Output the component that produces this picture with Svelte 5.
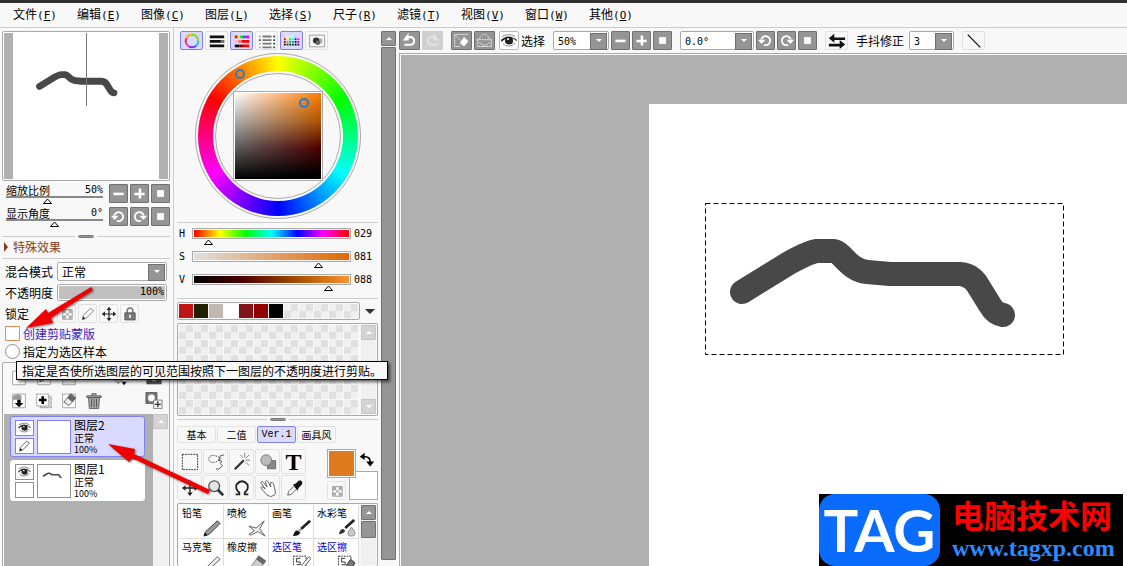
<script lang="ts">
	const menus = [
		['文件', 'F'],
		['编辑', 'E'],
		['图像', 'C'],
		['图层', 'L'],
		['选择', 'S'],
		['尺子', 'R'],
		['滤镜', 'T'],
		['视图', 'V'],
		['窗口', 'W'],
		['其他', 'O']
	]

	const STROKE =
		'M37 89 L84 60 Q104 49 112 48 H128 C138 49 143 67 162 69 L185 71 H255 Q266 72 272 81 L285 102 Q290 111 298 112'

	const checks = (x: number, y: number) =>
		`<path fill="#fff" stroke="#888" d="M${x}.5 ${y}.5h12v12h-12z"/><path fill="#aaa" d="M${x + 1} ${y + 1}h4v4h-4zM${x + 8} ${y + 1}h4v4h-4zM${x + 5} ${y + 5}h3v3h-3zM${x + 1} ${y + 8}h4v4h-4zM${x + 8} ${y + 8}h4v4h-4z"/>`

	const sheet = '<path fill="#fff" stroke="#999" d="M2.5 2.5h15v16h-15z"/>'

	// all icons share a 20x20 box
	const icons: Record<string, string> = {
		minus: '<path fill="#fff" d="M4 9h12v3H4z"/>',
		plus: '<path fill="#fff" d="M4 9h12v3H4zM9 4h3v12H9z"/>',
		stop: '<path fill="#fff" d="M6 6h8v8H6z"/>',
		ccw: '<path fill="none" stroke="#fff" stroke-width="2.2" d="M5 9A5.300 5.300 0 1 1 8 15"/><path fill="#fff" d="M1 9h9l-4.500 5z"/>',
		cw: '<path fill="none" stroke="#fff" stroke-width="2.2" d="M15 9A5.300 5.300 0 1 0 12 15"/><path fill="#fff" d="M19 9h-9l4.500 5z"/>',
		undo: '<path fill="none" stroke="#fff" stroke-width="2.5" d="M7 6h4a4.500 4.500 0 0 1 0 9H4"/><path fill="#fff" d="M9 1v9H2z"/>',
		redo: '<path fill="none" stroke="#e2e2e2" stroke-width="2.5" d="M13 6H9a4.500 4.500 0 0 0 0 9h7"/><path fill="#e2e2e2" d="M11 1v9h7z"/>',
		deselect:
			'<path fill="none" stroke="#fff" stroke-dasharray="2 1" d="M17 3H2v14h7"/><path stroke="#fff" stroke-dasharray="2 1" d="m3 4 8 8"/><path fill="#fff" d="m13 6 5 5-5 6-5-4z"/>',
		invert:
			'<path fill="none" stroke="#fff" stroke-dasharray="2 1" d="M1 9h18M2 9v8h16V9M4 8q6-11 12 0M4 12q6 7 12 0"/>',
		eye: '<path fill="#222" d="M1 9q8-8 18 0l-1 1q-3-3-4-3 2 7-4 7-6-1-4-6-2 0-4 3z"/><path fill="#fff" d="M8 7h2v2H8z"/><path stroke="#888" fill="none" d="M3 13q7 6 14-1M2 5q8-4 15 0"/>',
		flip: '<path fill="#111" d="M1 7l6-5v4h12v3H7v3zM19 14l-6-5v4H1v3h12v3z"/>',
		line: '<path stroke="#000" stroke-width="1.300" d="m3 3 14 14"/>',
		wheel:
			'<circle cx="10" cy="10" r="7" fill="none" stroke="#e3c" stroke-width="2"/><path fill="none" stroke="#fb0" stroke-width="2" d="M3.600 7a7 7 0 0 1 6.400-4"/><path fill="none" stroke="#7e2" stroke-width="2" d="M10 3a7 7 0 0 1 7 7"/><path fill="none" stroke="#2cf" stroke-width="2" d="M17 10a7 7 0 0 1-3 5.700"/><path fill="none" stroke="#63f" stroke-width="2" d="M14 15.700A7 7 0 0 1 7 16.300"/><path fill="none" stroke="#f33" stroke-width="2" d="M3.300 12a7 7 0 0 1 .3-5"/>',
		bars: '<path fill="#111" d="M2 4h16v3H2zM2 9h16v3H2zM2 14h16v3H2z"/><path fill="#777" d="M14 9h4v3h-4z"/>',
		hsv: '<path fill="#f00" d="M2 4h3v3H2zM10 9h8v3h-8zM12 14h6v3h-6z"/><path fill="#fe0" d="M5 4h3v3H5z"/><path fill="#0d3" d="M8 4h3v3H8z"/><path fill="#06f" d="M11 4h3v3h-3z"/><path fill="#d0e" d="M14 4h4v3h-4z"/><path fill="#fbb" d="M2 9h4v3H2z"/><path fill="#f66" d="M6 9h4v3H6z"/><path fill="#100" d="M2 14h5v3H2z"/><path fill="#800" d="M7 14h5v3H7z"/>',
		mixer:
			'<path fill="#777" d="M5 4h10v2H5zM5 8h10v2H5zM5 12h10v2H5zM5 16h10v2H5z"/><path fill="#444" d="M1 8h2v2H1zM17 4h2v2h-2zM17 8h2v2h-2zM17 12h2v2h-2zM17 16h2v2h-2z"/><path fill="#aaa" d="M1 4h2v2H1zM1 12h2v2H1zM1 16h2v2H1z"/>',
		swatches: ['#fbb #ffb #bfb #bff #bbf #fbf', '#f00 #ff0 #0f0 #0ff #00f #f0f', '#a00 #aa0 #0a0 #0aa #00a #a0a', '#300 #330 #030 #033 #003 #303']
			.map((row, y) =>
				row
					.split(' ')
					.map((c, x) => `<path fill="${c}" d="M${1 + x * 3} ${4 + y * 3}h2v2h-2z"/>`)
					.join('')
			)
			.join(''),
		scratch:
			'<path fill="#f4f4f4" stroke="#999" d="M1.500 3.500h17v13h-17z"/><circle cx="13" cy="10" r="3" fill="#aaa"/><circle cx="9" cy="9.500" r="3.500" fill="#333"/><circle cx="11" cy="12" r="2.500" fill="#666"/>',
		checker: checks(4, 4),
		pencil:
			'<path fill="#fff" stroke="#666" d="m3 17 1-5 9-9 4 3-9 9z"/><path fill="#222" d="m3 17 1-4 3 3z"/>',
		move: '<path stroke="#222" stroke-width="1.500" d="M10 3v14M3 10h14"/><path fill="#222" d="m10 1 3 4H7zM10 19l3-4H7zM1 10l4-3v6zM19 10l-4-3v6z"/>',
		lock: '<path fill="none" stroke="#777" stroke-width="2" d="M6.500 9V6a3.500 3.500 0 0 1 7 0v3"/><path fill="#777" stroke="#555" d="M3.500 8.500h13v9h-13z"/><path fill="#fff" d="M9 11h2v4H9z"/>',
		sheet,
		linework: sheet + '<path fill="#ddd" stroke="#555" d="m5 15 2-5 6-5 2 2-5 6z"/>',
		folder: '<path fill="#e4e4e4" stroke="#999" d="M2.500 5.500h5l2 2h8v11h-15z"/>',
		ruler: '<path fill="none" stroke="#777" d="m1 10 8 7 9-8M9 17V4"/><path fill="#000" d="M13 15h6l-3 4z"/>',
		mask: '<path fill="#555" d="M1 2h18v16H1z"/><circle cx="10" cy="10" r="4" fill="#fff"/>',
		down: sheet + '<path fill="#999" d="M3 5q6-5 10 0v4H3z"/><path fill="#000" d="M8 9h4v4h3l-5 5-5-5h3z"/>',
		merge:
			'<path fill="#ddd" stroke="#777" stroke-dasharray="2 1" d="M5.500 5.500h13v13h-13z"/><path fill="#fff" stroke="#777" stroke-dasharray="2 1" d="M1.500 2.500h14v14h-14z"/><path fill="#000" d="M7 5h3v3h3v3h-3v3H7v-3H4V8h3z"/>',
		clear: sheet + '<path fill="#eee" stroke="#555" d="m12 2 6 5-8 9-6-4z"/><path fill="#666" d="m12 2 6 5-4 5-6-5z"/>',
		trash:
			'<path fill="#aaa" stroke="#555" d="M3.500 6.500h13l-1 13h-11zM1.500 4.500h17v2h-17zM7.500 4V2h5v2"/><path stroke="#444" d="M7 8v10M10 8v10M13 8v10"/>',
		addmask:
			'<path fill="#777" stroke="#555" d="M.5 .5h13v13H.5z"/><circle cx="7" cy="7" r="4" fill="#fff"/><path fill="#eee" stroke="#777" d="M9.500 9.500h10v10h-10z"/><path stroke="#333" stroke-width="1.500" d="M14.500 11v7M11 14.500h7"/>',
		rect: '<path fill="none" stroke="#222" stroke-dasharray="2 1" d="M1.500 1.500h17v17h-17z"/>',
		lasso:
			'<path fill="none" stroke="#444" stroke-dasharray="2 1" d="M14 5Q4 0 2 6q0 6 8 4l6-4"/><path fill="none" stroke="#444" d="m19 2-4 1-2 5 3 1-1 3 2 2q-3 5-7 4"/>',
		wand: '<path stroke="#333" stroke-width="2.5" d="m2 18 10-10"/><path stroke="#777" d="M13 0v5M19 8h-5M18 2l-4 4M8 2l3 3M18 14l-4-4"/>',
		shape: '<path fill="#888" stroke="#666" d="M9.500 8.500h9v9h-9z"/><circle cx="8" cy="8" r="6" fill="#bbb" stroke="#777"/>',
		zoom: '<circle cx="8" cy="8" r="6" fill="#e4e4e4" stroke="#555" stroke-width="1.500"/><path stroke="#333" stroke-width="3" d="m12 12 6 6"/>',
		rotate: '<path fill="none" stroke="#222" stroke-width="2" d="M3 17h4v-2Q2 11 4 6q6-7 12 0 2 5-3 9v2h4"/>',
		hand: '<path fill="#fff" stroke="#555" d="M9 18 3 11q-2-3 1-2l3 2-5-7q1-3 3 0l4 5-2-6q2-3 3 0l3 6 0-5q2-1 3 1l2 8q1 3-1 5-4 3-8 0z"/>',
		dropper: '<path fill="#fff" stroke="#555" d="m3 18 1-4 6-6 3 3-6 6z"/><path fill="#111" d="m9 6 3-1 3-3q3-1 4 1t-1 4l-3 3-1 3z"/>',
		swap: '<path fill="none" stroke="#000" stroke-width="2" d="M4 6h4q6 0 6 7"/><path fill="#000" d="M7 1v9L1 6zM9 12h10l-5 6z"/>',
		pen: '<path fill="#999" stroke="#333" d="m1 19 2-5L16 2l3 3L7 17z"/><path fill="#111" d="m1 19 1-4 3 3z"/>',
		airbrush:
			'<path fill="#eee" stroke="#555" d="m1 17 6-4-6-5 8 2 9-8-5 9 6 8-8-5-8 4z"/>',
		brush: '<path stroke="#222" stroke-width="3" d="m9 11 10-9"/><path stroke="#aaa" stroke-width="3" d="m6 14 3-3"/><path fill="#111" d="M0 19q2-7 5-6l3 2q-1 4-8 4z"/>',
		water: '<path stroke="#222" stroke-width="3" d="m8 10 10-9"/><path fill="#333" d="M1 17q1-6 5-6l2 2q-1 3-7 4z"/><path fill="#ccc" stroke="#888" d="M15 9q8 10 0 10t0-10z"/>',
		marker: '<path fill="#eee" stroke="#555" d="M4 16 16 4l3 3L7 18H4z"/><path fill="#333" d="m3 18 1-4 4 4z"/>',
		eraser: '<path fill="#ccc" stroke="#888" d="m4 14 8-11 8 6-9 10z"/><path fill="#666" d="m9 7 8 6 3-4-8-6z"/>',
		selpen:
			'<path fill="#fff" stroke="#222" stroke-dasharray="2 1" d="M.5 3.500h14v15H.5z"/><path fill="none" stroke="#222" d="M8 6H4v4h4v3H4"/><path fill="#fff" stroke="#444" d="m9 17 1-4 8-9 2 2-8 10z"/>',
		seleraser:
			'<path fill="#fff" stroke="#222" stroke-dasharray="2 1" d="M.5 3.500h14v15H.5z"/><path fill="none" stroke="#222" d="M8 6H4v4h4v3H4"/><path fill="#777" stroke="#333" d="m9 14 5-7 5 4-5 8z"/>'
	}

	const modes = [
		['wheel', '色环', true],
		['bars', 'RGB滑块', false],
		['hsv', 'HSV滑块', true],
		['mixer', '中间色', false],
		['swatches', '自定义色盘', true],
		['scratch', '调色板', false]
	] as const

	const channels = [
		{ name: 'H', value: 29, max: 360, text: '029', track: 'linear-gradient(to right, red, yellow, lime, cyan, blue, magenta, red)' },
		{ name: 'S', value: 81, max: 100, text: '081', track: 'linear-gradient(to right, #e0e0e0, #e06800)' },
		{ name: 'V', value: 88, max: 100, text: '088', track: 'linear-gradient(to right, #000, #4c0000 32%, #b05400 70%, #ff9430)' }
	]

	const recent = ['#c01418', '#202000', '#c0b8b0', '#ffffff', '#801418', '#900000', '#000000']
	const tabs = ['基本', '二值', 'Ver.1', '画具风']
	const tools = ['rect', 'lasso', 'wand', 'shape', 'text', 'move', 'zoom', 'rotate', 'hand', 'dropper']
	const brushes = [
		['铅笔', 'pen'],
		['喷枪', 'airbrush'],
		['画笔', 'brush'],
		['水彩笔', 'water'],
		['马克笔', 'marker'],
		['橡皮擦', 'eraser'],
		['选区笔', 'selpen'],
		['选区擦', 'seleraser']
	]
	const layers = [
		{ name: '图层2', active: true },
		{ name: '图层1', active: false }
	]

	let zoom = $state(42)
	let angle = $state(50)
	let opacity = $state(100)
	let clipping = $state(false)
</script>

{#snippet icon(name: string)}
	<svg class="icon" viewBox="0 0 20 20" aria-hidden="true">{@html icons[name]}</svg>
{/snippet}

{#snippet grey(name: string, label: string)}
	<button class="grey" aria-label={label}>{@render icon(name)}</button>
{/snippet}

{#snippet grip()}
	<div class="grip"><i></i><b></b><i></i></div>
{/snippet}

<div class="app">
	<nav class="menubar">
		{#each menus as [name, key]}
			<button>{name}<span>(<u>{key}</u>)</span></button>
		{/each}
	</nav>

	<div class="workspace">
		<aside class="left">
			<div class="navigator">
				<svg viewBox="0 0 164 146" preserveAspectRatio="none">
					<path fill="#b0b0b0" d="M0 0h9v146H0zM155 0h9v146h-9z" />
					<g transform="translate(25 28) scale(.285)">
						<path class="ink" d={STROKE} />
					</g>
					<path fill="#777" d="M82 0h1v73h-1z" />
				</svg>
			</div>

			<div class="view-rows">
				<div class="view-row">
					<div class="view-slider">
						<label for="zoom">缩放比例</label><output>50%</output>
						<input id="zoom" type="range" bind:value={zoom} />
					</div>
					{@render grey('minus', '缩小')}
					{@render grey('plus', '放大')}
					{@render grey('stop', '重置缩放')}
				</div>
				<div class="view-row">
					<div class="view-slider">
						<label for="angle">显示角度</label><output>0°</output>
						<input id="angle" type="range" bind:value={angle} />
					</div>
					{@render grey('ccw', '逆时针旋转')}
					{@render grey('cw', '顺时针旋转')}
					{@render grey('stop', '重置旋转')}
				</div>
			</div>

			{@render grip()}
			<button class="effects"><i></i>特殊效果</button>

			<div class="props">
				<div class="prop">
					<label for="blend">混合模式</label>
					<div class="drop"><select id="blend"><option>正常</option></select></div>
				</div>
				<div class="prop">
					<label for="opacity">不透明度</label>
					<div class="opacity">
						<input id="opacity" type="range" bind:value={opacity} />
						<output>{opacity}%</output>
					</div>
				</div>
				<div class="prop">
					<span>锁定</span>
					<div class="locks">
						<button class="flat" aria-label="锁定不透明度">{@render icon('checker')}</button>
						<button class="flat" aria-label="锁定绘画">{@render icon('pencil')}</button>
						<button class="flat" aria-label="锁定移动">{@render icon('move')}</button>
						<button class="flat" aria-label="锁定全部">{@render icon('lock')}</button>
					</div>
				</div>
				<label class="tick hot"><input type="checkbox" bind:checked={clipping} />创建剪贴蒙版</label>
				<label class="tick"><input type="radio" name="source" />指定为选区样本</label>
			</div>

			<section class="layers">
				<div class="layer-tools">
					<div>
						{#each ['sheet', 'linework', 'folder', 'ruler', 'mask'] as name}
							<button class:push={name === 'ruler'} aria-label={name}>{@render icon(name)}</button>
						{/each}
					</div>
					<div>
						{#each ['down', 'merge', 'clear', 'trash', 'addmask'] as name}
							<button aria-label={name}>{@render icon(name)}</button>
						{/each}
					</div>
				</div>
				<div class="layer-body">
					<ul>
						{#each layers as layer}
							<li class:active={layer.active}>
								<div class="flags">
									<button aria-label="显示">{@render icon('eye')}</button>
									<button aria-label="编辑">{#if layer.active}{@render icon('pencil')}{/if}</button>
								</div>
								<div class="thumb">
									{#if !layer.active}
										<svg viewBox="0 0 32 32">
											<g transform="translate(3 5) scale(.067)"><path class="ink" d={STROKE} /></g>
										</svg>
									{/if}
								</div>
								<div class="info"><strong>{layer.name}</strong><span>正常</span><small>100%</small></div>
							</li>
						{/each}
					</ul>
					<div class="scroll pale"><button class="up" aria-label="向上"></button></div>
				</div>
			</section>
		</aside>

		<section class="middle">
			<div class="modes">
				{#each modes as [name, label, on]}
					<button class="flat" class:on aria-label={label}>{@render icon(name)}</button>
				{/each}
			</div>

			<div class="wheel">
				<div class="hue">
					<div class="hole">
						<div class="rim"></div>
						<div class="square"><div class="shade"></div></div>
					</div>
				</div>
				<span class="dot hue-dot"></span>
				<span class="dot shade-dot"></span>
			</div>

			<div class="channels">
				{#each channels as c}
					<div class="channel">
						<label for={c.name}>{c.name}</label>
						<input id={c.name} type="range" max={c.max} value={c.value} style="--track: {c.track}" />
						<output>{c.text}</output>
					</div>
				{/each}
			</div>

			<div class="recent">
				<div class="box cells">
					{#each { length: 12 } as _, i}
						<span class="cell" style:background={recent[i]}></span>
					{/each}
				</div>
				<button class="more" aria-label="更多"></button>
			</div>

			<div class="box palette">
				<div class="cells">
					{#each { length: 72 } as _}
						<span class="cell"></span>
					{/each}
				</div>
				<div class="scroll pale">
					<button class="up" aria-label="向上"></button>
					<button class="down" aria-label="向下"></button>
				</div>
			</div>

			{@render grip()}

			<div class="tabs">
				{#each tabs as tab}
					<button class="flat" class:on={tab === 'Ver.1'}>{tab}</button>
				{/each}
			</div>

			<div class="toolbox">
				<div class="tools">
					{#each tools as tool}
						<button class="flat" aria-label={tool}>
							{#if tool === 'text'}<b>T</b>{:else}{@render icon(tool)}{/if}
						</button>
					{/each}
				</div>
				<div class="colours">
					<button class="fore" aria-label="前景色"></button>
					<button class="swap" aria-label="交换">{@render icon('swap')}</button>
					<button class="flat clear" aria-label="透明色">{@render icon('checker')}</button>
					<button class="back" aria-label="背景色"></button>
				</div>
			</div>

			<div class="box brushes">
				<div class="brush-grid">
					{#each brushes as [name, art]}
						<button class:selection={name.startsWith('选区')}>{name}{@render icon(art)}</button>
					{/each}
				</div>
				<div class="scroll"><button class="up" aria-label="向上"></button><i class="short"></i></div>
			</div>
		</section>

		<div class="scroll outer"><button class="up" aria-label="向上"></button><i></i></div>

		<main>
			<div class="toolbar">
				<div class="group wide">
					{@render grey('undo', '撤销')}
					<button class="grey off" aria-label="重做">{@render icon('redo')}</button>
				</div>
				<div class="group">
					<div class="group wide">
						{@render grey('deselect', '取消选择')}
						{@render grey('invert', '反选')}
					</div>
					<button class="flat seen" aria-label="显示选区">{@render icon('eye')}</button>
					<span>选择</span>
				</div>
				<div class="group">
					<div class="drop zoom"><select aria-label="缩放"><option>50%</option></select></div>
					{@render grey('minus', '缩小')}
					{@render grey('plus', '放大')}
					{@render grey('stop', '重置缩放')}
				</div>
				<div class="group">
					<div class="drop angle"><select aria-label="角度"><option>0.0°</option></select></div>
					{@render grey('ccw', '逆时针旋转')}
					{@render grey('cw', '顺时针旋转')}
					{@render grey('stop', '重置旋转')}
				</div>
				<button class="flat" aria-label="翻转">{@render icon('flip')}</button>
				<div class="group">
					<label for="steady">手抖修正</label>
					<div class="drop steady"><select id="steady"><option>3</option></select></div>
				</div>
				<button class="flat" aria-label="直线">{@render icon('line')}</button>
			</div>

			<div class="viewport">
				<div class="canvas">
					<svg width="360" height="152" viewBox="0 0 360 152">
						<path class="ink" d={STROKE} />
						<path class="ants" d="M.5 .5h358v151H.5z" />
					</svg>
				</div>
				<div class="watermark">
					<strong>TAG</strong>
					<div><b>电脑技术网</b><a href="http://www.tagxp.com">www.tagxp.com</a></div>
				</div>
			</div>
		</main>
	</div>

	<div class="tooltip" role="tooltip">指定是否使所选图层的可见范围按照下一图层的不透明度进行剪贴。</div>

	<svg class="arrows" width="220" height="500" viewBox="0 0 220 500">
		<path d="M26 328l20-19 2 4 43-26 2 3-42 28 2 5z" />
		<path d="M108 444l27 5-1 5 76 36-2 4-76-36-3 4z" />
	</svg>
</div>

<style>
	:global(body) {
		background: #f8f8f8;
	}
	.app {
		position: relative;
		display: flex;
		flex-direction: column;
		height: 100vh;
		overflow: hidden;
		color: #000;
		background: #f8f8f8;
		font: 12px/14px 'Noto Sans CJK SC', sans-serif;
	}
	.app * {
		box-sizing: border-box;
	}
	button,
	select,
	input {
		margin: 0;
		padding: 0;
		border: 0;
		border-radius: 0;
		color: inherit;
		background: none;
		font: inherit;
	}
	ul {
		margin: 0;
		padding: 0;
		list-style: none;
	}
	.icon {
		display: block;
		width: 18px;
		height: 18px;
	}
	.ink {
		fill: none;
		stroke: #484848;
		stroke-width: 24px;
		stroke-linecap: round;
		stroke-linejoin: round;
	}

	.menubar {
		display: flex;
		flex: none;
		height: 28px;
		padding-left: 13px;
		border-top: 3px solid #303030;
		border-bottom: 1px solid #ccc;
	}
	.menubar button {
		width: 64px;
		text-align: left;
		white-space: nowrap;
	}
	.menubar span,
	.channel,
	output,
	.zoom,
	.angle,
	.steady {
		font-family: 'DejaVu Sans Mono', monospace;
		font-size: 10px;
	}
	.menubar span {
		font-size: 11px;
	}
	.workspace {
		display: flex;
		flex: 1;
		min-height: 0;
	}

	/* shared controls */
	.grey {
		display: grid;
		place-items: center;
		flex: none;
		width: 19px;
		height: 19px;
		border: 1px solid #707070;
		border-radius: 1px;
		background: #959595;
	}
	.grey .icon {
		width: 17px;
		height: 17px;
	}
	.grey.off {
		border-color: #d0d0d0;
		background: #d0d0d0;
	}
	.flat {
		display: grid;
		place-items: center;
		flex: none;
		width: 23px;
		height: 19px;
		border: 1px solid #e2e2e2;
		border-radius: 2px;
	}
	.flat.on {
		border-color: #8080f0;
		background: #dadaff;
	}
	.box {
		border: 1px solid #aaa;
		border-radius: 2px;
		padding: 1px;
	}
	.drop {
		position: relative;
		height: 19px;
		border: 1px solid #aaa;
		border-radius: 2px;
		background: #fff;
	}
	.drop select {
		display: block;
		width: 100%;
		height: 17px;
		padding-left: 4px;
		appearance: none;
	}
	.drop::before,
	.drop::after {
		position: absolute;
		content: '';
		pointer-events: none;
	}
	.drop::before {
		top: 1px;
		right: 1px;
		width: 15px;
		height: 15px;
		border: 1px solid #707070;
		background: #959595;
	}
	.drop::after {
		top: 7px;
		right: 6px;
		border: 3px solid transparent;
		border-top-color: #fff;
		border-bottom: 0;
	}
	.grip {
		display: flex;
		align-items: center;
		gap: 3px;
		height: 4px;
	}
	.grip i {
		flex: 1;
		height: 1px;
		background: #ccc;
	}
	.grip b {
		width: 16px;
		height: 3px;
		border: 1px solid #777;
		border-radius: 2px;
		background: #999;
	}
	.scroll {
		display: flex;
		flex: none;
		flex-direction: column;
		gap: 1px;
		width: 15px;
		background: #f0f0f0;
	}
	.scroll button {
		display: grid;
		place-items: center;
		width: 15px;
		height: 15px;
		border: 1px solid #707070;
		border-radius: 1px;
		background: #959595;
	}
	.scroll button::after {
		border: 3px solid transparent;
		content: '';
	}
	.scroll .up::after {
		border-top: 0;
		border-bottom-color: #fff;
	}
	.scroll .down::after {
		border-top-color: #fff;
		border-bottom: 0;
	}
	.scroll .down {
		margin-top: auto;
	}
	.scroll.pale button {
		border-color: #c4c4c4;
		background: #d4d4d4;
	}
	.scroll i {
		flex: 1;
		border: 1px solid #707070;
		border-radius: 1px;
		background: #959595;
	}
	.scroll .short {
		flex: none;
		height: 17px;
	}
	.outer {
		padding: 3px 0 6px;
		background: none;
	}
	input[type='range'] {
		display: block;
		width: 100%;
		min-width: 0;
		appearance: none;
	}
	input[type='range']::-webkit-slider-thumb {
		width: 9px;
		height: 6px;
		appearance: none;
		background: url("data:image/svg+xml,%3Csvg xmlns='http://www.w3.org/2000/svg' viewBox='0 0 9 6'%3E%3Cpath fill='%23fff' stroke='%23000' d='M.5 5.500h8L4.500 1z'/%3E%3C/svg%3E");
	}

	/* left column */
	.left {
		display: flex;
		flex: none;
		flex-direction: column;
		width: 174px;
		padding: 3px 3px 0 2px;
		border-right: 1px solid #ccc;
	}
	.navigator {
		height: 150px;
		padding: 1px;
		border: 1px solid #aaa;
		border-radius: 2px;
		background: #fff;
	}
	.navigator svg {
		display: block;
		width: 100%;
		height: 146px;
	}
	.view-rows {
		display: grid;
		gap: 4px;
		margin: 3px 0 8px;
		padding-left: 4px;
	}
	.view-row {
		display: flex;
		gap: 2px;
		height: 19px;
	}
	.view-slider {
		display: grid;
		flex: 1;
		grid-template-columns: 1fr auto;
		grid-template-rows: 12px 8px;
		margin-right: 4px;
		font-size: 11px;
		line-height: 12px;
	}
	.view-slider input {
		grid-column: 1 / 3;
		height: 8px;
	}
	.view-slider input::-webkit-slider-runnable-track {
		height: 8px;
		background: linear-gradient(#888 2px, transparent 2px);
	}
	.view-slider input::-webkit-slider-thumb {
		margin-top: 2px;
	}
	.effects {
		display: flex;
		align-items: center;
		gap: 5px;
		height: 21px;
		padding: 0 0 2px 2px;
		border-bottom: 1px solid #ccc;
		color: #853d1a;
	}
	.effects i {
		border: 5px solid transparent;
		border-left: 4px solid #853d1a;
		border-right: 0;
	}
	.props {
		display: grid;
		grid-template-columns: minmax(0, 1fr);
		gap: 3px;
		padding: 3px;
	}
	.prop {
		display: grid;
		grid-template-columns: 52px minmax(0, 1fr);
		align-items: center;
	}
	.opacity {
		display: grid;
		grid-template-columns: minmax(0, 1fr);
		height: 17px;
		border: 1px solid #aaa;
		border-radius: 2px;
		background: #fff;
	}
	.opacity > * {
		grid-area: 1 / 1;
	}
	.opacity input {
		width: auto;
		height: 13px;
		margin: 1px;
		background: #c0c0c0;
	}
	.opacity input::-webkit-slider-thumb {
		opacity: 0;
	}
	.opacity output {
		justify-self: end;
		padding-right: 2px;
		pointer-events: none;
	}
	.locks {
		display: flex;
		gap: 2px;
	}
	.locks .flat {
		width: 19px;
	}
	.locks .icon {
		width: 16px;
		height: 16px;
	}
	.tick {
		display: flex;
		align-items: center;
		gap: 3px;
		height: 15px;
	}
	.tick input {
		width: 15px;
		height: 15px;
		border: 1px solid #909090;
		background: #fff;
		appearance: none;
	}
	.tick input[type='radio'] {
		border-radius: 50%;
	}
	.tick.hot {
		color: #3a1cc0;
	}
	.tick.hot input {
		border-color: #e09060;
	}
	.layers {
		display: flex;
		flex: 1;
		flex-direction: column;
		min-height: 0;
		padding: 0 1px;
		border: 1px solid #aaa;
		border-bottom: 0;
		border-radius: 2px 2px 0 0;
	}
	.layer-tools {
		display: grid;
		gap: 6px;
		padding: 6px 5px 5px 6px;
	}
	.layer-tools div {
		display: flex;
		gap: 7px;
	}
	.layer-tools .icon {
		height: 17px;
	}
	.layer-tools .push {
		margin-left: 25px;
	}
	.layer-tools button:last-child {
		margin-left: auto;
	}
	.layer-body {
		display: flex;
		flex: 1;
		min-height: 0;
	}
	.layer-body ul {
		display: flex;
		flex: 1;
		flex-direction: column;
		gap: 3px;
		padding: 2px 8px 0 6px;
		background: #b0b0b0;
	}
	.layer-body li {
		display: flex;
		align-items: center;
		gap: 3px;
		height: 41px;
		padding: 0 4px;
		border: 1px solid #fff;
		border-radius: 3px;
		background: #fff;
	}
	.layer-body .active {
		border-color: #8080f0;
		background: #dadaff;
	}
	.flags {
		display: grid;
		gap: 2px;
		width: 19px;
	}
	.flags button,
	.thumb {
		border: 1px solid #909090;
		background: #fff;
	}
	.active .flags button,
	.active .thumb {
		border-color: #8080f0;
	}
	.flags button {
		display: grid;
		place-items: center;
		height: 16px;
	}
	.flags .icon {
		width: 17px;
		height: 14px;
	}
	.flags .icon :global(path) {
		vector-effect: non-scaling-stroke;
	}
	.thumb {
		width: 34px;
		height: 34px;
	}
	.thumb svg {
		display: block;
	}
	.info {
		display: grid;
		font-size: 10px;
		line-height: 12px;
	}
	.info strong {
		font-size: 12px;
		font-weight: 400;
		line-height: 14px;
	}
	.info small {
		font-size: 9px;
	}

	/* colour and tool column */
	.middle {
		display: flex;
		flex: none;
		flex-direction: column;
		width: 207px;
		padding: 3px 3px 0;
	}
	.modes {
		display: flex;
		gap: 2px;
		padding-left: 3px;
	}
	.wheel {
		position: relative;
		display: grid;
		place-items: center;
		align-self: center;
		width: 166px;
		height: 166px;
		margin: 3px 0;
		border: 1px solid #aaa;
		border-radius: 50%;
	}
	.hue {
		display: grid;
		place-items: center;
		width: 160px;
		height: 160px;
		border-radius: 50%;
		background: conic-gradient(from -60deg, red, yellow, lime, cyan, blue, magenta, red);
	}
	.hole {
		display: grid;
		place-items: center;
		width: 130px;
		height: 130px;
		border-radius: 50%;
		background: #f8f8f8;
	}
	.hole > * {
		grid-area: 1 / 1;
	}
	.rim {
		width: 126px;
		height: 126px;
		border: 1px solid #aaa;
		border-radius: 50%;
	}
	.square {
		width: 90px;
		height: 90px;
		padding: 1px;
		border: 1px solid #aaa;
		background: #fff;
	}
	.shade {
		height: 86px;
		background: linear-gradient(#ff7c00, #b05400 32%, #500000 64%, #000 94%);
	}
	.shade::before {
		display: block;
		height: 86px;
		background: linear-gradient(#fff, #000);
		mask-image: linear-gradient(to right, #000, transparent);
		content: '';
	}
	.dot {
		position: absolute;
		width: 10px;
		height: 10px;
		border: 2px solid #2080d0;
		border-radius: 50%;
	}
	.hue-dot {
		top: 15px;
		left: 39px;
	}
	.shade-dot {
		top: 44px;
		left: 103px;
	}
	.channels {
		display: grid;
		gap: 6px;
		padding: 5px 0 7px 2px;
		border-top: 1px solid #ccc;
		border-bottom: 1px solid #ccc;
	}
	.channel {
		display: grid;
		grid-template-columns: 13px 159px 1fr;
		height: 17px;
		line-height: 11px;
	}
	.channel output {
		padding-left: 3px;
	}
	.channel input {
		height: 17px;
	}
	.channel input::-webkit-slider-runnable-track {
		height: 17px;
		background:
			linear-gradient(#aaa, #aaa) 0 0 / 100% 1px no-repeat,
			linear-gradient(#aaa, #aaa) 0 10px / 100% 1px no-repeat,
			linear-gradient(#aaa, #aaa) 0 0 / 1px 11px no-repeat,
			linear-gradient(#aaa, #aaa) 100% 0 / 1px 11px no-repeat,
			var(--track) 2px 2px / 155px 7px no-repeat;
	}
	.channel input::-webkit-slider-thumb {
		margin-top: 11px;
	}
	.recent {
		display: flex;
		align-items: center;
		gap: 5px;
		margin: 3px 0;
	}
	.cells {
		display: grid;
		grid-template-columns: repeat(12, 14px);
		gap: 1px;
		width: 183px;
	}
	.cell {
		height: 14px;
		background: conic-gradient(#e0e0e0 25%, #f0f0f0 0 50%, #e0e0e0 0 75%, #f0f0f0 0);
	}
	.more {
		border: 5px solid transparent;
		border-top-color: #333;
		border-bottom: 0;
	}
	.palette {
		display: flex;
		justify-content: space-between;
		height: 93px;
		margin-bottom: 1px;
	}
	.palette .cells {
		width: 179px;
	}
	.tabs {
		display: flex;
		gap: 1px;
		margin: 5px 0 6px;
	}
	.tabs .flat {
		width: 39px;
		height: 17px;
		font-size: 10px;
		line-height: 12px;
	}
	.tabs .on {
		font-family: 'Liberation Mono', monospace;
	}
	.toolbox {
		display: flex;
		justify-content: space-between;
	}
	.tools {
		display: grid;
		grid-template-columns: repeat(5, 25px);
		gap: 1px;
	}
	.tools .flat {
		width: 25px;
		height: 25px;
	}
	.tools b {
		font: bold 24px/22px 'Liberation Serif', serif;
	}
	.colours {
		display: grid;
		grid-template-columns: 22px 7px 22px;
		grid-template-rows: 22px 7px 22px;
	}
	.fore,
	.back {
		border: 1px solid #aaa;
	}
	.fore {
		z-index: 1;
		grid-area: 1 / 1 / 3 / 3;
		background: #e07a1e;
		box-shadow: inset 0 0 0 1px #fff;
	}
	.back {
		grid-area: 2 / 2 / 4 / 4;
		background: #fff;
	}
	.swap {
		display: grid;
		grid-area: 1 / 3;
		place-items: center;
	}
	.swap .icon,
	.clear .icon {
		width: 16px;
		height: 16px;
	}
	.clear {
		grid-area: 3 / 1;
		align-self: end;
		width: 19px;
	}
	.brushes {
		display: flex;
		flex: 1;
		justify-content: space-between;
		min-height: 0;
		margin-top: 3px;
		overflow: hidden;
		border-bottom: 0;
	}
	.brush-grid {
		display: grid;
		grid-template-columns: repeat(4, 45px);
		grid-auto-rows: 34px;
	}
	.brush-grid button {
		display: grid;
		align-content: start;
		padding: 2px 0 0 3px;
		border-right: 1px solid #ddd;
		border-bottom: 1px solid #ddd;
		background: #fff;
		font-size: 10px;
		line-height: 12px;
		text-align: left;
	}
	.brush-grid .selection {
		color: #0000e0;
	}
	.brush-grid .icon {
		justify-self: end;
		margin-right: 2px;
	}

	/* canvas side */
	main {
		display: flex;
		flex: 1;
		flex-direction: column;
		min-width: 0;
		margin-left: 3px;
	}
	.toolbar {
		display: flex;
		flex: none;
		gap: 8px;
		padding: 3px 0;
		line-height: 19px;
		white-space: nowrap;
	}
	.group {
		display: flex;
		gap: 2px;
	}
	.wide .grey {
		width: 21px;
	}
	.seen {
		width: 20px;
		margin-left: 2px;
		border-color: #bbb;
		background: #fff;
	}
	.zoom {
		width: 56px;
	}
	.angle {
		width: 74px;
	}
	.steady {
		width: 45px;
		margin-left: 3px;
	}
	.viewport {
		position: relative;
		display: flex;
		flex: 1;
		padding: 50px 0 0 249px;
		border: 1px solid #aaa;
		border-width: 1px 0 0 1px;
		background: #b0b0b0;
		box-shadow: inset 1px 1px #f8f8f8;
	}
	.canvas {
		flex: 1;
		padding: 99px 0 0 56px;
		overflow: hidden;
		background: #fff;
	}
	.ants {
		fill: none;
		stroke: #000;
		stroke-dasharray: 5 3;
	}
	.watermark {
		position: absolute;
		right: 4px;
		bottom: 0;
		display: flex;
		width: 304px;
		height: 72px;
		background: #000;
	}
	.watermark > strong {
		width: 121px;
		border-radius: 16px;
		color: #fff;
		background: #0a6cff;
		font: bold 58px/72px Lato, sans-serif;
		text-align: center;
	}
	.watermark div {
		display: grid;
		align-content: center;
		padding-left: 12px;
	}
	.watermark b {
		color: #f00;
		font-size: 32px;
		line-height: 36px;
	}
	.watermark a {
		color: #2a8cff;
		font: bold 24px/32px 'Liberation Serif', serif;
		text-decoration: none;
	}

	.tooltip {
		position: absolute;
		top: 361px;
		left: 16px;
		padding: 0 5px;
		border: 1px solid #000;
		background: #f8f8f8;
		box-shadow: 2px 2px 3px #0009;
		line-height: 17px;
		white-space: nowrap;
	}
	.arrows {
		position: absolute;
		top: 0;
		left: 0;
		fill: #f00000;
		filter: drop-shadow(1px 1px 1px #0008);
		pointer-events: none;
	}
</style>
